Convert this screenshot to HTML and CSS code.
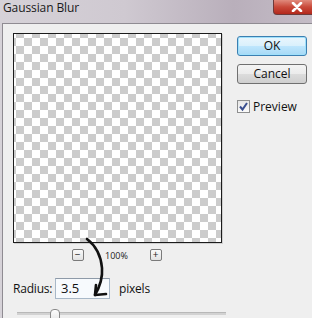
FILE: index.html
```html
<!DOCTYPE html>
<html>
<head>
<meta charset="utf-8">
<link rel="stylesheet" href="styles.css">
</head>
<body>
<div class="window">
  <div class="titlebar">
    <span class="title">Gaussian Blur</span>
    <div class="close"><svg width="12" height="10" viewBox="0 0 12 10"><path d="M2 1 L10 9 M10 1 L2 9" stroke="#fff" stroke-width="2.6" stroke-linecap="round"/></svg></div>
  </div>
  <div class="frame">
    <div class="left">
      <div class="preview"></div>
      <div class="zoomrow">
        <span class="zbtn">&minus;</span>
        <span class="zoomval">100%</span>
        <span class="zbtn">+</span>
      </div>
      <div class="radiusrow">
        <span class="label">Radius:</span>
        <span class="input">3.5</span>
        <span class="unit">pixels</span>
      </div>
      <div class="slider">
        <div class="track"></div>
        <div class="thumb"></div>
      </div>
    </div>
    <div class="right">
      <div class="btn ok">OK</div>
      <div class="btn">Cancel</div>
      <label class="check"><span class="box"><svg width="11" height="11" viewBox="0 0 11 11"><path d="M2 5.5 L4.5 8.5 L9 2" fill="none" stroke="#3a4f8f" stroke-width="2"/></svg></span>Preview</label>
    </div>
  </div>
  <svg class="arrow" width="312" height="318" viewBox="0 0 312 318">
    <path d="M87 239 C96 246 101 256 102 268 C103 280 99 288 95 295" fill="none" stroke="#111" stroke-width="2.6" stroke-linecap="round"/>
    <path d="M96 285 L95 295 L106 294" fill="none" stroke="#111" stroke-width="2.6" stroke-linecap="round" stroke-linejoin="round"/>
  </svg>
</div>
</body>
</html>
```
FILE: styles.css
```css
html, body { margin: 0; padding: 0; }
body { font-family: "Open Sans", "Noto Sans", sans-serif; font-size: 12px; color: #111; }
.window {
  width: 312px; height: 318px; position: relative; overflow: hidden;
  background: linear-gradient(90deg, #d6d2d8 0%, #cfc9d1 40%, #b9afbb 75%, #c4bcc6 100%);
}
.titlebar { height: 23px; display: flex; justify-content: space-between; align-items: flex-start; }
.title { padding-left: 3px; line-height: 16px; font-size: 12px; color: #1a1a1a; letter-spacing: -0.1px; }
.close {
  width: 40px; height: 15px; margin-right: -1px;
  background: linear-gradient(180deg, #e08a7c 0%, #c9493a 50%, #b3281c 100%);
  border: 1px solid #6e3a3a; border-top: 0; border-radius: 0 0 0 4px;
  display: flex; align-items: center; justify-content: center; box-sizing: border-box;
  padding-left: 8px;
}
.frame {
  margin-left: 2px; height: 295px;
  border-top: 1px solid #8f8b92; border-left: 1px solid #8f8b92;
  background: #efefef; display: flex;
}
.left { padding: 9px 0 0 10px; width: 209px; }
.preview {
  width: 207px; height: 208px; border: 1px solid #1c1c1c;
  box-shadow: 1px 1px 0 #cfcfcf;
  background: repeating-conic-gradient(#cccccc 0 25%, #ffffff 0 50%) 2px 4px / 16px 16px;
}
.zoomrow { margin-top: 6px; display: flex; justify-content: center; align-items: center; gap: 21px; height: 12px; padding-right: 2px; }
.zbtn {
  width: 10px; height: 10px; border: 1px solid #7a7a7a; border-radius: 2px;
  background: linear-gradient(#fafafa, #e2e2e2);
  font-size: 10px; line-height: 9px; text-align: center; color: #222;
}
.zoomval { font-size: 9px; color: #222; width: 24px; text-align: center; }
.radiusrow { margin-top: 17px; display: flex; align-items: center; height: 21px; }
.label { width: 42px; font-size: 12px; letter-spacing: -0.2px; }
.input {
  width: 48px; height: 19px; border: 1px solid #a8b8c8; border-top-color: #8e9aa8;
  background: #f7fafd; padding-left: 5px; font-size: 13px; line-height: 19px;
}
.unit { margin-left: 9px; font-size: 12px; letter-spacing: -0.2px; }
.slider { position: relative; margin-top: 10px; height: 12px; }
.track { position: absolute; left: 4px; right: -4px; top: 3px; height: 2px; background: #d2d2d2; border-top: 1px solid #b8b8b8; }
.thumb {
  position: absolute; left: 37px; top: 0; width: 8px; height: 12px;
  border: 1px solid #8a8a8a; border-radius: 4px 4px 0 0; background: linear-gradient(#fdfdfd, #e4e4e4);
}
.right { margin-left: 15px; padding-top: 12px; display: flex; flex-direction: column; }
.btn {
  width: 68px; height: 18px; border: 1px solid #707070; border-radius: 3px;
  background: linear-gradient(#f4f4f4 0%, #ebebeb 50%, #dcdcdc 51%, #cfcfcf 100%);
  text-align: center; line-height: 18px; font-size: 12px; margin-bottom: 8px;
}
.btn.ok {
  border-color: #3c7fb1;
  background: linear-gradient(#eaf6fd 0%, #d9f0fc 50%, #bee6fd 51%, #a7d9f5 100%);
  box-shadow: inset 0 0 0 1px #9fe0fb;
}
.check { display: flex; align-items: center; margin-top: 8px; font-size: 12px; height: 13px; }
.box {
  width: 11px; height: 11px; border: 1px solid #8e8f8f; background: linear-gradient(#e6e6e6, #fbfbfb);
  margin-right: 3px; display: flex;
}
.arrow { position: absolute; left: 0; top: 0; pointer-events: none; }
```
